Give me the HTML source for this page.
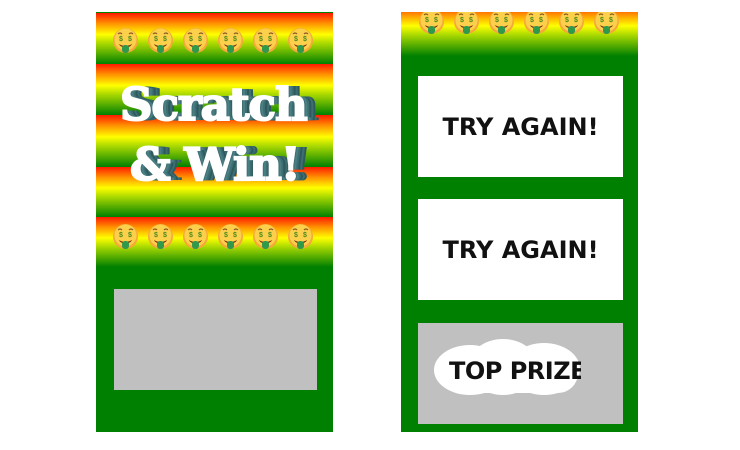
<!DOCTYPE html>
<html><head><style>
body{margin:0;width:740px;height:450px;background:#fff;position:relative;overflow:hidden;font-family:"Liberation Sans",sans-serif}
.p{position:absolute;top:12px;width:237px;height:420px;background:#008000;overflow:hidden}
.band{position:absolute;left:0;width:100%;background:linear-gradient(#ff1a00 0%,#ff9000 20%,#ffff00 42%,#a8d800 60%,#008000 100%)}
.e{position:absolute;width:27px;height:27px}
.box{position:absolute;background:#fff;display:flex;align-items:center;justify-content:center;font:bold 24px "DejaVu Sans",sans-serif;color:#111}
.t{position:absolute;color:#fff;font:bold 45px "DejaVu Serif",serif;letter-spacing:-1px;-webkit-text-stroke:2px #fff;text-shadow:2px 0 #3d6e72,4px 0 #4a7f83,6px 0 #3d6e72,8px 0 #2e5a5e,10px 0 #3d6e72,12px 0 #2e5a5e}
</style></head><body>
<svg width="0" height="0" style="position:absolute"><defs>
<symbol id="m" viewBox="0 0 27 27">
<circle cx="13.5" cy="13.5" r="12.5" fill="#f6a83a"/>
<circle cx="13.5" cy="12.5" r="11" fill="#fcd04a"/>
<path d="M6 7q2-2 4 0M17 7q2-2 4 0" stroke="#8a5a20" stroke-width="1.2" fill="none"/>
<text x="9" y="14" font-size="7" fill="#4a8a20" text-anchor="middle" font-family="Liberation Sans" font-weight="bold">$</text>
<text x="18" y="14" font-size="7" fill="#4a8a20" text-anchor="middle" font-family="Liberation Sans" font-weight="bold">$</text>
<path d="M7 17q6.5 4 13 0q-1 3-6.5 3.5q-5.5-.5-6.5-3.5z" fill="#7a2a10"/>
<rect x="10" y="18" width="7" height="8" rx="3" fill="#2f9a4a"/>
</symbol></defs></svg>

<div class="p" style="left:96px">
<div class="band" style="top:1px;height:51px"></div>
<div class="band" style="top:52px;height:51px"></div>
<div class="band" style="top:103px;height:52px"></div>
<div class="band" style="top:155px;height:50px"></div>
<div class="band" style="top:205px;height:50px"></div>
<svg class="e" style="left:16px;top:15px"><use href="#m"/></svg>
<svg class="e" style="left:51px;top:15px"><use href="#m"/></svg>
<svg class="e" style="left:86px;top:15px"><use href="#m"/></svg>
<svg class="e" style="left:121px;top:15px"><use href="#m"/></svg>
<svg class="e" style="left:156px;top:15px"><use href="#m"/></svg>
<svg class="e" style="left:191px;top:15px"><use href="#m"/></svg>
<div class="t" style="left:24px;top:66px">Scratch</div>
<div class="t" style="left:34px;top:126px">&amp; Win!</div>
<svg class="e" style="left:16px;top:211px"><use href="#m"/></svg>
<svg class="e" style="left:51px;top:211px"><use href="#m"/></svg>
<svg class="e" style="left:86px;top:211px"><use href="#m"/></svg>
<svg class="e" style="left:121px;top:211px"><use href="#m"/></svg>
<svg class="e" style="left:156px;top:211px"><use href="#m"/></svg>
<svg class="e" style="left:191px;top:211px"><use href="#m"/></svg>
<div style="position:absolute;left:18px;top:277px;width:203px;height:101px;background:#c0c0c0"></div>
</div>

<div class="p" style="left:401px">
<div class="band" style="top:-8px;height:52px"></div>
<svg class="e" style="left:17px;top:-4px"><use href="#m"/></svg>
<svg class="e" style="left:52px;top:-4px"><use href="#m"/></svg>
<svg class="e" style="left:87px;top:-4px"><use href="#m"/></svg>
<svg class="e" style="left:122px;top:-4px"><use href="#m"/></svg>
<svg class="e" style="left:157px;top:-4px"><use href="#m"/></svg>
<svg class="e" style="left:192px;top:-4px"><use href="#m"/></svg>
<div class="box" style="left:17px;top:64px;width:205px;height:101px">TRY AGAIN!</div>
<div class="box" style="left:17px;top:187px;width:205px;height:101px">TRY AGAIN!</div>
<div style="position:absolute;left:17px;top:311px;width:205px;height:101px;background:#c0c0c0;overflow:hidden">
<div style="position:absolute;left:16px;top:22px;width:72px;height:50px;border-radius:50%;background:#fff"></div>
<div style="position:absolute;left:50px;top:16px;width:70px;height:56px;border-radius:50%;background:#fff"></div>
<div style="position:absolute;left:90px;top:20px;width:72px;height:52px;border-radius:50%;background:#fff"></div>
<div style="position:absolute;left:30px;top:30px;width:130px;height:40px;background:#fff;border-radius:20px"></div>
<div style="position:absolute;left:31px;top:34px;width:132px;overflow:hidden;white-space:nowrap;font:bold 24px 'DejaVu Sans',sans-serif;color:#111;letter-spacing:-0.5px">TOP PRIZE</div>
</div>
</div>
</body></html>
